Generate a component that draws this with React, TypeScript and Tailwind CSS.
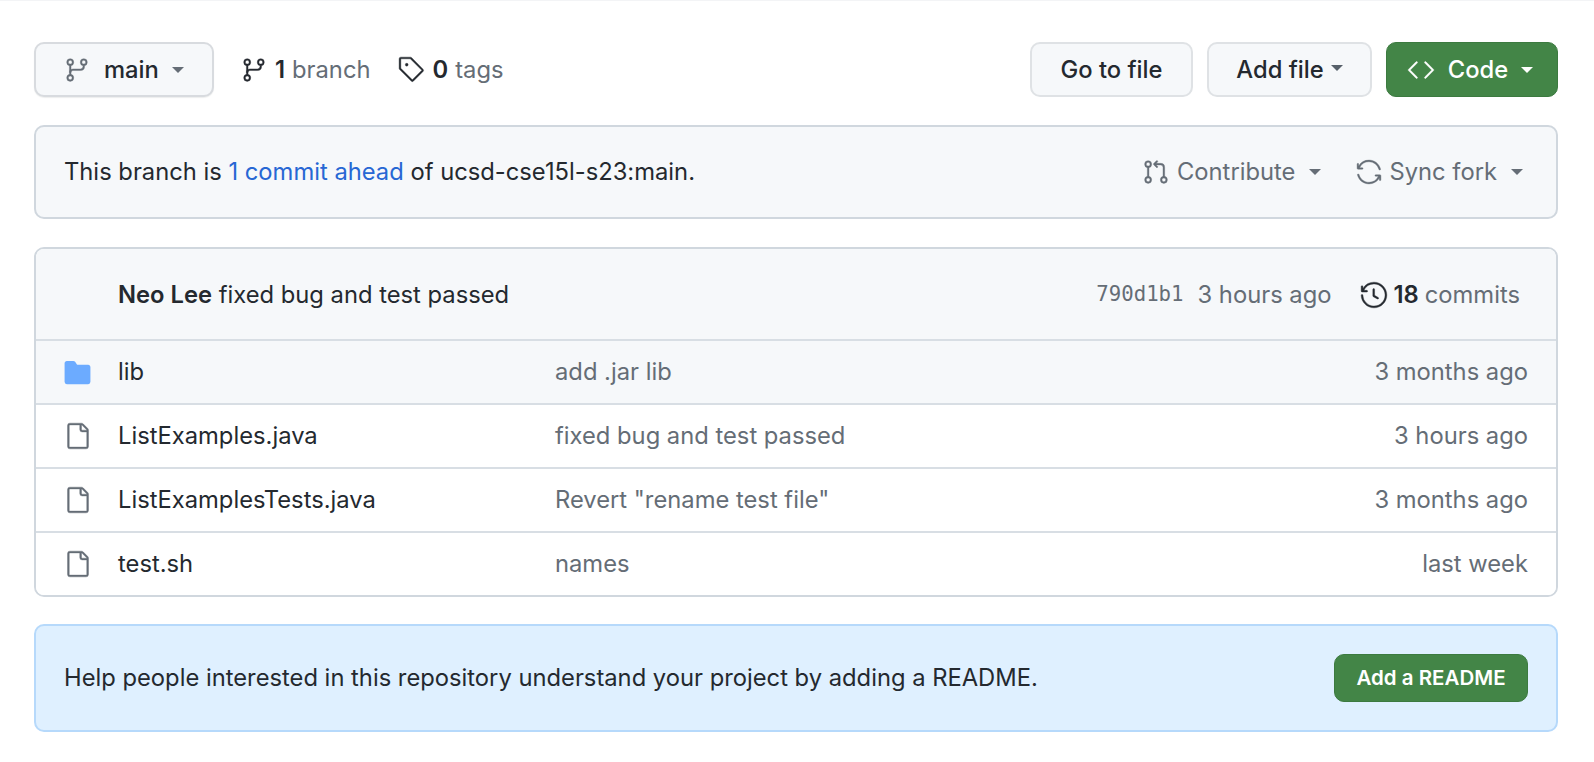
import React from 'react';
import {
  GoCode,
  GoFile,
  GoFileDirectoryFill,
  GoGitBranch,
  GoGitPullRequest,
  GoHistory,
  GoSync,
  GoTag,
} from 'react-icons/go';

const Caret = ({ className = '' }: { className?: string }) => (
  <span className={`inline-block w-0 h-0 border-x-[6.5px] border-x-transparent border-t-[6.5px] ${className}`} />
);

// the reference's icons are scaled up and read heavier than the plain paths
const heavy = { stroke: 'currentColor', strokeWidth: 0.35 };

const files = [
  { name: 'lib', message: 'add .jar lib', time: '3 months ago', dir: true },
  { name: 'ListExamples.java', message: 'fixed bug and test passed', time: '3 hours ago' },
  { name: 'ListExamplesTests.java', message: 'Revert "rename test file"', time: '3 months ago' },
  { name: 'test.sh', message: 'names', time: 'last week' },
];

export default function App() {
  return (
    <div className="min-h-[762px] bg-white border-t border-[#f3f4f6] pl-[34px] pr-[36px] pt-[41px] font-['Inter',sans-serif] text-[23.75px] text-[#24292f]">
      {/* Branch bar */}
      <div className="flex items-center">
        <button className="w-[180px] h-[55px] flex items-center pl-[28px] bg-[#f6f8fa] border-2 border-[#d8dbdf] rounded-[10px] font-medium shadow-[0_1px_1px_rgba(31,35,40,0.08)]">
          <GoGitBranch size={26} className="text-[#656d76]" {...heavy} />
          <span className="ml-[14px]">main</span>
          <Caret className="ml-[13px] border-t-[#656d76]" />
        </button>
        <div className="flex items-center ml-[27px]">
          <GoGitBranch size={26} {...heavy} />
          <span className="ml-[8px] font-semibold">1</span>
          <span className="ml-[7px] text-[#656d76]">branch</span>
        </div>
        <div className="flex items-center ml-[27px]">
          <GoTag size={27} {...heavy} />
          <span className="ml-[8px] font-semibold">0</span>
          <span className="ml-[7px] text-[#656d76]">tags</span>
        </div>
        <div className="ml-auto flex items-center">
          <button className="w-[163px] h-[55px] bg-[#f6f8fa] border-2 border-[#dfe2e5] rounded-[10px] font-medium">Go to file</button>
          <button className="ml-[14px] w-[165px] h-[55px] flex items-center justify-center bg-[#f6f8fa] border-2 border-[#dfe2e5] rounded-[10px] font-medium">
            Add file
            <Caret className="ml-[7px] -mt-[3px] border-t-[#57606a]" />
          </button>
          <button className="ml-[14px] w-[172px] h-[55px] flex items-center justify-center pr-[4px] bg-[#438547] border border-[#3c7a40] rounded-[10px] font-medium text-white">
            <GoCode size={28} {...heavy} />
            <span className="ml-[13px]">Code</span>
            <Caret className="ml-[13px] border-t-white" />
          </button>
        </div>
      </div>

      {/* Fork status */}
      <div className="mt-[28px] h-[94px] flex items-center pl-[28px] pr-[33px] bg-[#f6f8fa] border-2 border-[#d0d7de] rounded-[10px]">
        <span>
          This branch is <span className="text-[#2767d4]">1 commit ahead</span> of ucsd-cse15l-s23:main.
        </span>
        <div className="ml-auto flex items-center text-[#656d76]">
          <GoGitPullRequest size={26} {...heavy} />
          <span className="ml-[8px]">Contribute</span>
          <Caret className="ml-[14px] border-t-[#656d76]" />
          <GoSync size={26} {...heavy} className="ml-[35px]" />
          <span className="ml-[7px]">Sync fork</span>
          <Caret className="ml-[14px] border-t-[#656d76]" />
        </div>
      </div>

      {/* File table */}
      <div className="mt-[28px] border-2 border-[#d0d7de] rounded-[10px] overflow-hidden">
        <div className="h-[92px] flex items-center pl-[82px] pr-[36px] pt-[1px] bg-[#f6f8fa] border-b-2 border-[#d8dee4]">
          <span>
            <span className="font-semibold">Neo Lee</span> fixed bug and test passed
          </span>
          <div className="ml-auto flex items-center">
            <span className="font-['DejaVu_Sans_Mono',monospace] text-[20.7px] text-[#656d76]">790d1b1</span>
            <span className="ml-[14px] text-[#656d76]">3 hours ago</span>
            <GoHistory size={28} {...heavy} className="ml-[28px]" />
            <span className="ml-[6px] font-semibold">18</span>
            <span className="ml-[6px] text-[#656d76]">commits</span>
          </div>
        </div>
        {files.map((file, index) => (
          <div
            key={file.name}
            className={`flex items-center pl-[28px] pr-[28px] ${file.dir ? 'h-[62px] bg-[#f6f8fa]' : 'h-[64px] bg-white'} ${index > 0 ? 'border-t-2 border-[#d8dee4]' : ''}`}
          >
            <span className="w-[54px] flex">
              {file.dir ? (
                <GoFileDirectoryFill size={31} className="text-[#6cabff] -ml-[2px] -mr-[1px]" />
              ) : (
                <GoFile size={28} {...heavy} className="text-[#656d76]" />
              )}
            </span>
            <span className="w-[437px]">{file.name}</span>
            <span className="text-[#656d76]">{file.message}</span>
            <span className="ml-auto text-[#656d76]">{file.time}</span>
          </div>
        ))}
      </div>

      {/* Readme prompt */}
      <div className="mt-[27px] h-[108px] flex items-center px-[28px] bg-[#dff0ff] border-2 border-[#b6d9fb] rounded-[10px]">
        <span>Help people interested in this repository understand your project by adding a README.</span>
        <button className="ml-auto w-[194px] h-[48px] bg-[#438547] border border-[#3c7a40] rounded-[10px] text-[20.5px] font-semibold text-white">
          Add a README
        </button>
      </div>
    </div>
  );
}
